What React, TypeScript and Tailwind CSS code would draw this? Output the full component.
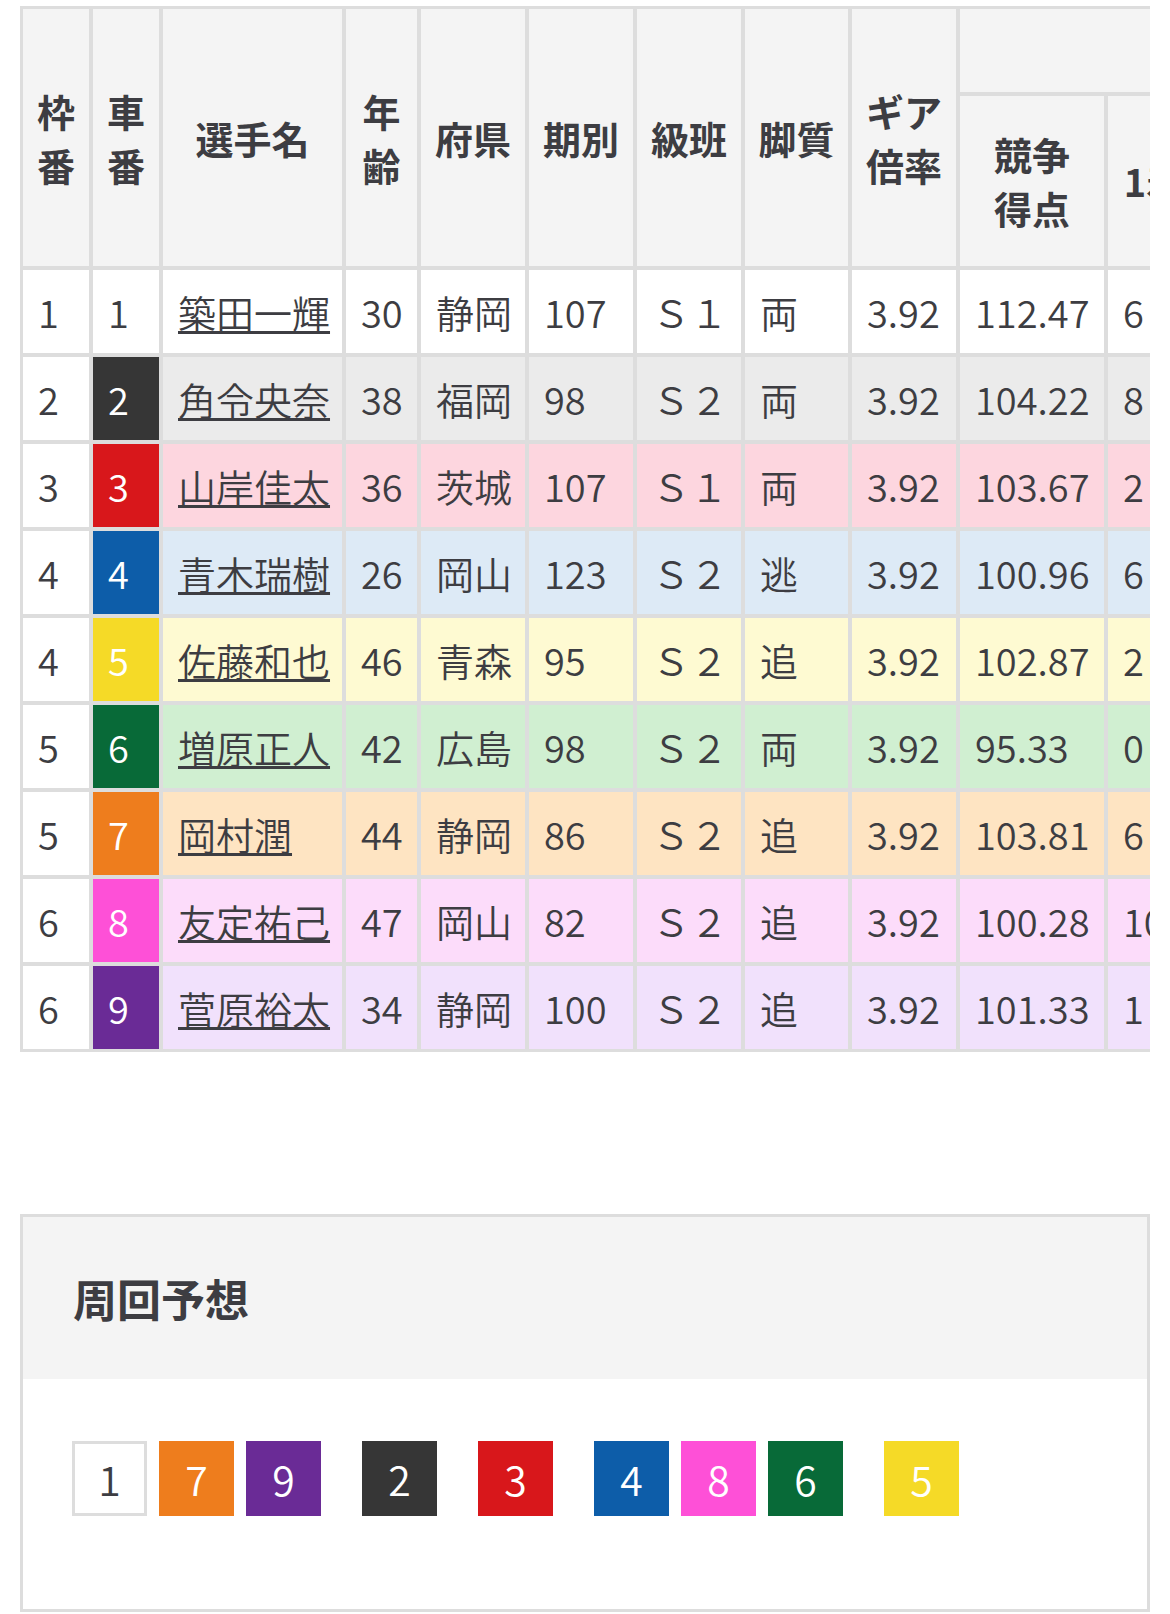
import React from "react";

type Rider = {
  waku: number;
  sha: number;
  name: string;
  age: number;
  pref: string;
  ki: number;
  cls: string;
  kyaku: string;
  gear: string;
  score: string;
  results: number[];
  rowBg: string;
  swatch: string;
};

const riders: Rider[] = [
  { waku: 1, sha: 1, name: "築田一輝", age: 30, pref: "静岡", ki: 107, cls: "Ｓ１", kyaku: "両", gear: "3.92", score: "112.47", results: [6, 3, 2, 9], rowBg: "bg-white", swatch: "bg-white text-[#3d3d42]" },
  { waku: 2, sha: 2, name: "角令央奈", age: 38, pref: "福岡", ki: 98, cls: "Ｓ２", kyaku: "両", gear: "3.92", score: "104.22", results: [8, 4, 3, 7], rowBg: "bg-[#ebebeb]", swatch: "bg-[#363636] text-white" },
  { waku: 3, sha: 3, name: "山岸佳太", age: 36, pref: "茨城", ki: 107, cls: "Ｓ１", kyaku: "両", gear: "3.92", score: "103.67", results: [2, 5, 4, 10], rowBg: "bg-[#fdd6df]", swatch: "bg-[#d8171b] text-white" },
  { waku: 4, sha: 4, name: "青木瑞樹", age: 26, pref: "岡山", ki: 123, cls: "Ｓ２", kyaku: "逃", gear: "3.92", score: "100.96", results: [6, 2, 1, 12], rowBg: "bg-[#ddeaf6]", swatch: "bg-[#0d5da9] text-white" },
  { waku: 4, sha: 5, name: "佐藤和也", age: 46, pref: "青森", ki: 95, cls: "Ｓ２", kyaku: "追", gear: "3.92", score: "102.87", results: [2, 6, 5, 8], rowBg: "bg-[#fefad2]", swatch: "bg-[#f5da27] text-white" },
  { waku: 5, sha: 6, name: "増原正人", age: 42, pref: "広島", ki: 98, cls: "Ｓ２", kyaku: "両", gear: "3.92", score: "95.33", results: [0, 1, 3, 14], rowBg: "bg-[#d0efd1]", swatch: "bg-[#086a38] text-white" },
  { waku: 5, sha: 7, name: "岡村潤", age: 44, pref: "静岡", ki: 86, cls: "Ｓ２", kyaku: "追", gear: "3.92", score: "103.81", results: [6, 4, 2, 9], rowBg: "bg-[#fee4c2]", swatch: "bg-[#ee7d1d] text-white" },
  { waku: 6, sha: 8, name: "友定祐己", age: 47, pref: "岡山", ki: 82, cls: "Ｓ２", kyaku: "追", gear: "3.92", score: "100.28", results: [10, 3, 4, 6], rowBg: "bg-[#fcdcfa]", swatch: "bg-[#fe50d7] text-white" },
  { waku: 6, sha: 9, name: "菅原裕太", age: 34, pref: "静岡", ki: 100, cls: "Ｓ２", kyaku: "追", gear: "3.92", score: "101.33", results: [1, 2, 5, 13], rowBg: "bg-[#f1e1fc]", swatch: "bg-[#6a2b96] text-white" },
];

const chip: Record<number, string> = {
  1: "bg-white text-[#3d3d42] border-[3px] border-[#dddddd]",
  2: "bg-[#363636] text-white",
  3: "bg-[#d8171b] text-white",
  4: "bg-[#0d5da9] text-white",
  5: "bg-[#f5da27] text-white",
  6: "bg-[#086a38] text-white",
  7: "bg-[#ee7d1d] text-white",
  8: "bg-[#fe50d7] text-white",
  9: "bg-[#6a2b96] text-white",
};

const lineGroups = [[1, 7, 9], [2], [3], [4, 8, 6], [5]];

const head = "bg-[#f4f4f4] flex items-center justify-center text-center font-bold leading-[54px]";
const cell = "flex items-center pl-[15px] whitespace-nowrap font-[350]";

export default function App() {
  return (
    <div
      className="w-[1170px] min-h-[1614px] bg-white text-[#3d3d42] text-[38px]"
      style={{ fontFamily: '"Noto Sans CJK JP", "Noto Sans", sans-serif' }}
    >
      {/* 出走表 */}
      <div className="px-[20px] pt-[6px]">
        <div className="overflow-hidden">
          <div className="grid w-max gap-[4px] p-[3px] bg-[#dddddd] grid-cols-[66px_66px_179px_71px_104px_104px_104px_103px_104px_144px_92px_92px_92px_92px] grid-rows-[83px_170px_repeat(9,83px)]">
            <div className={`${head} row-span-2`}>枠<br />番</div>
            <div className={`${head} row-span-2`}>車<br />番</div>
            <div className={`${head} row-span-2`}>選手名</div>
            <div className={`${head} row-span-2`}>年<br />齢</div>
            <div className={`${head} row-span-2`}>府県</div>
            <div className={`${head} row-span-2`}>期別</div>
            <div className={`${head} row-span-2`}>級班</div>
            <div className={`${head} row-span-2`}>脚質</div>
            <div className={`${head} row-span-2`}>ギア<br />倍率</div>
            <div className={`${head} col-span-5`} />
            <div className={head}>競争<br />得点</div>
            <div className={head}>1着</div>
            <div className={head}>2着</div>
            <div className={head}>3着</div>
            <div className={head}>着外</div>

            {riders.map((r) => (
              <React.Fragment key={r.sha}>
                <div className={`${cell} bg-white`}>{r.waku}</div>
                <div className={`${cell} ${r.swatch}`}>{r.sha}</div>
                <div className={`${cell} ${r.rowBg}`}>
                  <a href="#" className="underline decoration-[3px] underline-offset-[3px]">
                    {r.name}
                  </a>
                </div>
                <div className={`${cell} ${r.rowBg}`}>{r.age}</div>
                <div className={`${cell} ${r.rowBg}`}>{r.pref}</div>
                <div className={`${cell} ${r.rowBg}`}>{r.ki}</div>
                <div className={`${cell} ${r.rowBg}`}>{r.cls}</div>
                <div className={`${cell} ${r.rowBg}`}>{r.kyaku}</div>
                <div className={`${cell} ${r.rowBg}`}>{r.gear}</div>
                <div className={`${cell} ${r.rowBg}`}>{r.score}</div>
                {r.results.map((v, i) => (
                  <div key={i} className={`${cell} ${r.rowBg} pl-[14px]`}>{v}</div>
                ))}
              </React.Fragment>
            ))}
          </div>
        </div>
      </div>

      {/* 周回予想 */}
      <section className="mx-[20px] mt-[162px] border-[3px] border-[#dddddd]">
        <div className="h-[162px] bg-[#f4f4f4] flex items-center pl-[50px]">
          <h2 className="text-[44px] font-bold">周回予想</h2>
        </div>
        <div className="h-[230px] bg-white pt-[62px] pl-[49px]">
          <div className="flex gap-[41px]">
            {lineGroups.map((g, gi) => (
              <div key={gi} className="flex gap-[12px]">
                {g.map((n) => (
                  <div
                    key={n}
                    className={`w-[75px] h-[75px] flex items-center justify-center text-[41px] font-[350] leading-none ${chip[n]}`}
                  >
                    {n}
                  </div>
                ))}
              </div>
            ))}
          </div>
        </div>
      </section>
    </div>
  );
}
